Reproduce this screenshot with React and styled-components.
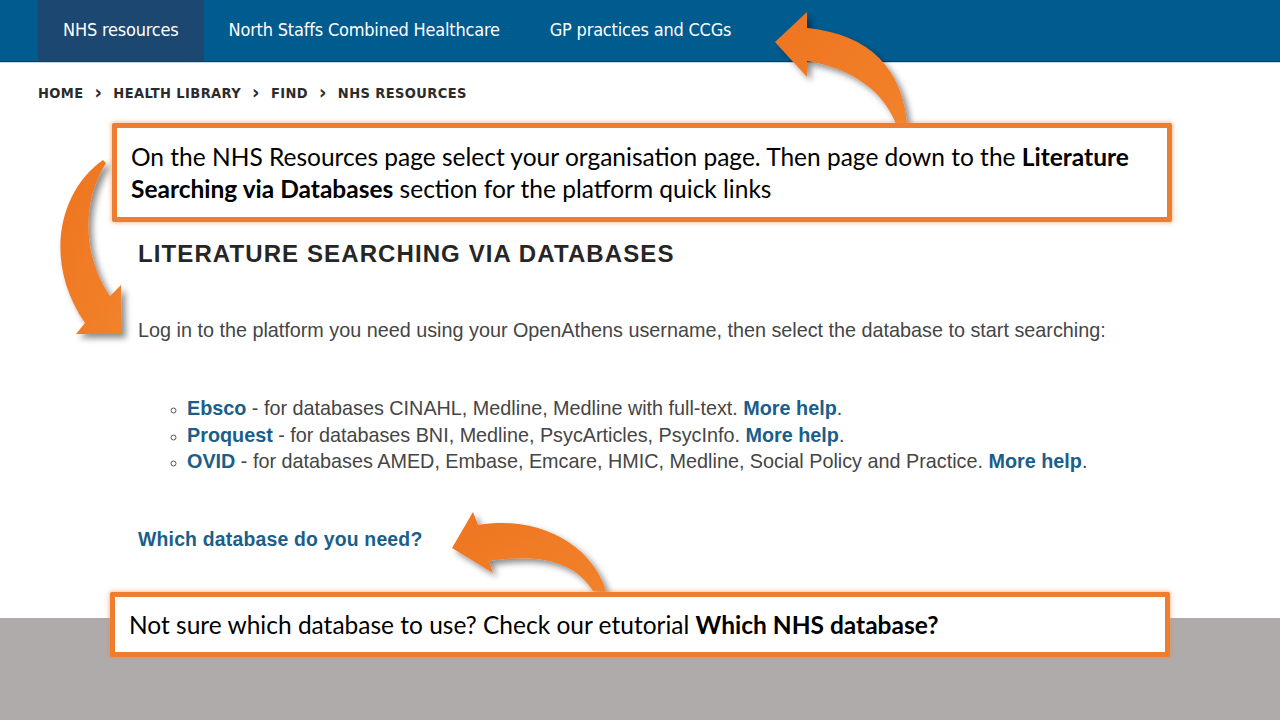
import React from 'react';
import styled, { createGlobalStyle } from 'styled-components';

const GlobalStyle = createGlobalStyle`
  html, body {
    margin: 0;
    padding: 0;
    background: #ffffff;
  }
  body {
    font-family: "Liberation Sans", Arial, sans-serif;
  }
`;

const Slide = styled.div`
  position: relative;
  width: 1280px;
  height: 720px;
  overflow: hidden;
  display: flex;
  flex-direction: column;
  background: #ffffff;
`;

// top navigation of the library site
const NavBar = styled.nav`
  height: 62px;
  flex: none;
  display: flex;
  padding-left: 38px;
  background: #005b8f;
  border-bottom: 1px solid #0a3f66;
  box-shadow: 0 1px 0 #c9d6e0;
  box-sizing: border-box;
`;

const NavTab = styled.a`
  display: flex;
  align-items: center;
  padding: 0 25px 3px;
  color: #ffffff;
  font-family: "DejaVu Sans Condensed", "Liberation Sans", sans-serif;
  font-size: 18px;
  letter-spacing: -0.2px;
  background: ${({ active }) => (active ? '#1b4770' : 'transparent')};
`;

const Page = styled.main`
  flex: 1;
  display: flex;
  flex-direction: column;
`;

const Crumbs = styled.div`
  display: flex;
  align-items: center;
  gap: 11px;
  padding: 22px 0 0 38px;
  height: 18px;
  color: #2b2b2b;
  font-family: "DejaVu Sans Condensed", "Liberation Sans", sans-serif;
  font-weight: 700;
  font-size: 14.5px;
  letter-spacing: 0.4px;
  text-transform: uppercase;
`;

const Chevron = styled.span`
  font-weight: 700;
  font-size: 20px;
  line-height: 18px;
  margin-top: -2px;
`;

const Content = styled.section`
  display: flex;
  flex-direction: column;
  padding: 139px 0 0 138px;
`;

const Heading = styled.h2`
  margin: 0;
  font-family: "Liberation Sans", Arial, sans-serif;
  font-weight: 700;
  font-size: 24px;
  letter-spacing: 1.1px;
  color: #262626;
  line-height: 26px;
`;

const Lead = styled.p`
  margin: 52px 0 0;
  font-size: 19.8px;
  line-height: 22px;
  color: #454545;
`;

const Bullets = styled.ul`
  margin: 54px 0 0;
  padding: 0 0 0 49px;
  list-style: circle;
  font-size: 19.8px;
  line-height: 26.5px;
  color: #454545;

  li::marker {
    font-size: 16px;
    color: #555;
  }
`;

const Link = styled.a`
  color: #1a5e8b;
  font-weight: 700;
`;

const NeedLink = styled(Link)`
  margin-top: 53px;
  font-size: 19.4px;
  line-height: 22px;
  letter-spacing: 0.2px;
`;

const Footer = styled.div`
  height: 102px;
  flex: none;
  background: #afabab;
`;

// annotation layer
const Arrows = styled.svg`
  position: absolute;
  inset: 0;
  pointer-events: none;
`;

const Callout = styled.div`
  position: absolute;
  left: ${({ x }) => x}px;
  top: ${({ y }) => y}px;
  width: ${({ w }) => w}px;
  box-sizing: border-box;
  padding: ${({ pad }) => pad};
  border: 5px solid #ed7d31;
  border-radius: 2px;
  background: #ffffff;
  box-shadow: 0 0 4px 1px rgba(240, 140, 70, 0.55);
  font-family: Lato, "Open Sans", sans-serif;
  font-size: 24.5px;
  line-height: 32px;
  color: #000000;

  b {
    font-weight: 700;
  }
`;

const arrowPaths = [
  'M775,42 L807,12 L807,28 C870,34 903,70 907,124 L896,124 C884,92 852,68 807,61 L807,77 Z',
  'M103,160 C60,190 42,260 85,323 L76,334 L122,334 L121,285 L110,296 C84,258 80,205 106,163 Z',
  'M452,548 L473,512 L478,525 C540,515 592,545 606,591 L593,591 C575,562 540,553 489,561 L493,573 Z',
];

const dbs = [
  { name: 'Ebsco', text: ' - for databases CINAHL, Medline, Medline with full-text. ' },
  { name: 'Proquest', text: ' - for databases BNI, Medline, PsycArticles, PsycInfo. ' },
  { name: 'OVID', text: ' - for databases AMED, Embase, Emcare, HMIC, Medline, Social Policy and Practice. ' },
];

export default function App() {
  return (
    <>
      <GlobalStyle />
      <Slide>
        <NavBar>
          <NavTab active>NHS resources</NavTab>
          <NavTab>North Staffs Combined Healthcare</NavTab>
          <NavTab>GP practices and CCGs</NavTab>
        </NavBar>
        <Page>
          <Crumbs>
            <span>Home</span>
            <Chevron>›</Chevron>
            <span>Health Library</span>
            <Chevron>›</Chevron>
            <span>Find</span>
            <Chevron>›</Chevron>
            <span>NHS Resources</span>
          </Crumbs>
          <Content>
            <Heading>LITERATURE SEARCHING VIA DATABASES</Heading>
            <Lead>
              Log in to the platform you need using your OpenAthens username, then select the database to start searching:
            </Lead>
            <Bullets>
              {dbs.map((d) => (
                <li key={d.name}>
                  <Link>{d.name}</Link>
                  {d.text}
                  <Link>More help</Link>.
                </li>
              ))}
            </Bullets>
            <NeedLink>Which database do you need?</NeedLink>
          </Content>
        </Page>
        <Footer />

        <Arrows width="1280" height="720" viewBox="0 0 1280 720">
          <defs>
            <linearGradient id="orange" x1="0" y1="0" x2="1" y2="1">
              <stop offset="0" stopColor="#ee7420" />
              <stop offset="1" stopColor="#f2822b" />
            </linearGradient>
            <filter id="shade" x="-30%" y="-30%" width="160%" height="160%">
              <feDropShadow dx="4" dy="4" stdDeviation="3" floodColor="#000" floodOpacity="0.45" />
            </filter>
          </defs>
          {arrowPaths.map((d) => (
            <path key={d} d={d} fill="url(#orange)" filter="url(#shade)" />
          ))}
        </Arrows>

        <Callout x={112} y={123} w={1060} pad="13px 10px 12px 14px">
          On the NHS Resources page select your organisation page. Then page down to the <b>Literature Searching via Databases</b> section for the platform quick links
        </Callout>
        <Callout x={110} y={592} w={1060} pad="12px 10px 11px 14px">
          Not sure which database to use? Check our etutorial <b>Which NHS database?</b>
        </Callout>
      </Slide>
    </>
  );
}
